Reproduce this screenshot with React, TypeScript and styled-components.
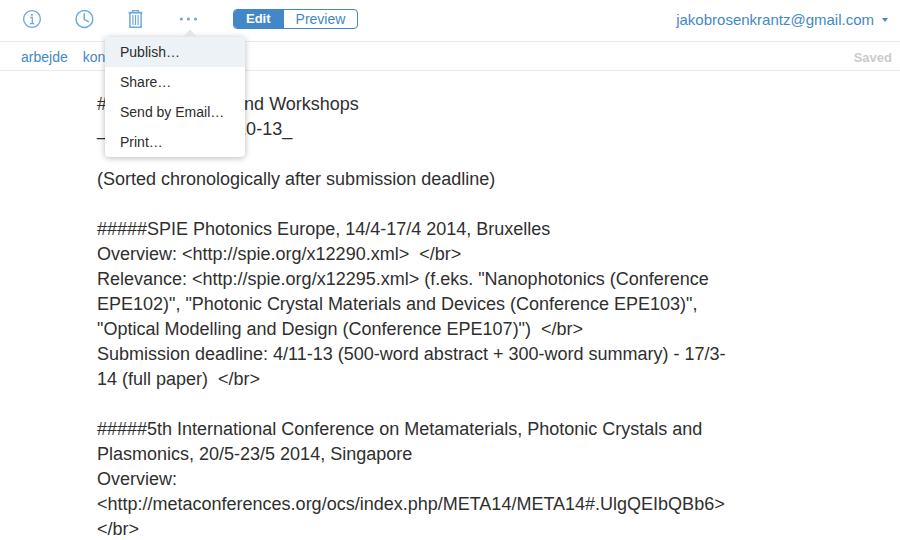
import React, { useState } from "react";
import styled, { createGlobalStyle, css } from "styled-components";

const blue = "#4288c8";
const iconBlue = "#6fa9dc";

const GlobalStyle = createGlobalStyle`
  *, *::before, *::after { box-sizing: border-box; }
  body { margin: 0; background: #fff; }
  body, button, textarea { font-family: "Liberation Sans", Helvetica, Arial, sans-serif; }
  button { margin: 0; padding: 0; border: 0; background: none; cursor: pointer; }
`;

const Page = styled.div`
  display: flex;
  flex-direction: column;
  height: 100vh;
`;

const Toolbar = styled.header`
  display: flex;
  align-items: flex-start;
  flex: none;
  height: 42px;
  padding: 0 12px 0 6px;
  border-bottom: 1px solid #e9e9e9;
`;

const ToolSlot = styled.div`
  position: relative;
  width: 52px;
`;

const ToolButton = styled.button`
  display: flex;
  align-items: center;
  justify-content: center;
  width: 100%;
  height: 38px;
`;

const Menu = styled.div`
  position: absolute;
  z-index: 2;
  top: 37px;
  left: -57px;
  width: 140px;
  background: #fff;
  border-radius: 4px;
  box-shadow: 0 1px 6px rgba(0, 0, 0, 0.28);
`;

const MenuPointer = styled.svg`
  position: absolute;
  bottom: 100%;
  left: 77px;
  display: block;
`;

const MenuItem = styled.button<{ $active?: boolean }>`
  display: block;
  width: 100%;
  padding: 0 15px;
  font-size: 14px;
  line-height: 30px;
  text-align: left;
  white-space: nowrap;
  color: #2c2c2c;
  background: ${(p) => (p.$active ? "#ecf2f6" : "transparent")};

  &:last-of-type { border-radius: 0 0 4px 4px; }
`;

const Segments = styled.div`
  display: flex;
  margin: 9px 0 0 19px;
  border: 1px solid ${blue};
  border-radius: 4px;
  overflow: hidden;
`;

const Segment = styled.button<{ $selected: boolean }>`
  padding: 0 12px;
  font-size: 14px;
  line-height: 18px;
  color: ${blue};

  ${(p) =>
    p.$selected &&
    css`
      color: #fff;
      background: ${blue};
      font-size: 13px;
      font-weight: bold;
    `}

  & + & { border-left: 1px solid ${blue}; }
`;

const Account = styled.button`
  display: flex;
  align-items: center;
  gap: 8px;
  height: 39px;
  margin-left: auto;
  font-size: 15px;
  color: ${blue};
`;

const TagBar = styled.div`
  display: flex;
  align-items: center;
  flex: none;
  gap: 15px;
  height: 29px;
  padding: 2px 8px 0 21px;
  border-bottom: 1px solid #e9e9e9;
  font-size: 14px;
`;

const Tag = styled.a`
  color: ${blue};
  text-decoration: none;
`;

const Status = styled.span`
  margin-left: auto;
  font-size: 13px;
  font-weight: bold;
  color: #cbcbcb;
`;

const Editor = styled.textarea`
  flex: 1;
  display: block;
  width: 100%;
  max-width: 740px;
  min-height: 0;
  padding: 21px 0 0 97px;
  border: 0;
  outline: 0;
  resize: none;
  overflow: hidden;
  background: transparent;
  font-size: 18px;
  line-height: 25px;
  color: #2f2f2f;
`;

const InfoIcon = () => (
  <svg width="20" height="20" viewBox="0 0 20 20" fill="none" stroke={iconBlue}>
    <circle cx="10" cy="10" r="8.4" strokeWidth="1.4" />
    <circle cx="9.9" cy="5.8" r="1.1" fill={iconBlue} stroke="none" />
    <path d="M8.2 8.5h2.1v6M8 14.6h4.3" strokeWidth="1.3" />
  </svg>
);

const ClockIcon = () => (
  <svg width="20" height="20" viewBox="0 0 20 20" fill="none" stroke={iconBlue}>
    <circle cx="10.4" cy="10" r="8.4" strokeWidth="1.5" />
    <path d="M10.2 4.3v6.1l4.7 2.5" strokeWidth="1.5" />
  </svg>
);

const TrashIcon = () => (
  <svg width="16" height="20" viewBox="0 0 16 20" fill="none" stroke={iconBlue}>
    <path d="M.6 3.7h13.8" strokeWidth="1.8" />
    <path d="M4.6 3.2V1.6h5.8v1.6" strokeWidth="1.4" />
    <path d="M1.9 4v14.3h11.2V4" strokeWidth="1.5" />
    <path d="M4.9 6v10M7.5 6v10M10.1 6v10" strokeWidth="1.2" />
  </svg>
);

const DotsIcon = () => (
  <svg width="20" height="20" viewBox="0 0 20 20" fill={iconBlue}>
    <circle cx="3.3" cy="10" r="1.6" />
    <circle cx="10.4" cy="10" r="1.6" />
    <circle cx="17.5" cy="10" r="1.6" />
  </svg>
);

const tags = ["arbejde", "konf"];
const actions = ["Publish…", "Share…", "Send by Email…", "Print…"];

const note = `###Conferences and Workshops
_Last update: 10/10-13_

(Sorted chronologically after submission deadline)

#####SPIE Photonics Europe, 14/4-17/4 2014, Bruxelles
Overview: <http://spie.org/x12290.xml>  </br>
Relevance: <http://spie.org/x12295.xml> (f.eks. "Nanophotonics (Conference EPE102)", "Photonic Crystal Materials and Devices (Conference EPE103)", "Optical Modelling and Design (Conference EPE107)")  </br>
Submission deadline: 4/11-13 (500-word abstract + 300-word summary) - 17/3-14 (full paper)  </br>

#####5th International Conference on Metamaterials, Photonic Crystals and Plasmonics, 20/5-23/5 2014, Singapore
Overview: <http://metaconferences.org/ocs/index.php/META14/META14#.UlgQEIbQBb6>  </br>`;

export default function App() {
  const [mode, setMode] = useState("Edit");
  const [menuOpen, setMenuOpen] = useState(true);
  const [text, setText] = useState(note);

  return (
    <Page>
      <GlobalStyle />
      <Toolbar>
        <ToolSlot>
          <ToolButton aria-label="Info"><InfoIcon /></ToolButton>
        </ToolSlot>
        <ToolSlot>
          <ToolButton aria-label="History"><ClockIcon /></ToolButton>
        </ToolSlot>
        <ToolSlot>
          <ToolButton aria-label="Trash"><TrashIcon /></ToolButton>
        </ToolSlot>
        <ToolSlot>
          <ToolButton
            aria-label="More"
            aria-haspopup="menu"
            aria-expanded={menuOpen}
            onClick={() => setMenuOpen(!menuOpen)}
          >
            <DotsIcon />
          </ToolButton>
          {menuOpen && (
            <Menu role="menu">
              <MenuPointer width="16" height="8" viewBox="0 0 16 8">
                <path d="M1 8 8 .6 15 8z" fill="#e3e5e7" />
              </MenuPointer>
              {actions.map((label, i) => (
                <MenuItem key={label} role="menuitem" $active={i === 0}>
                  {label}
                </MenuItem>
              ))}
            </Menu>
          )}
        </ToolSlot>
        <Segments>
          {["Edit", "Preview"].map((label) => (
            <Segment
              key={label}
              $selected={mode === label}
              aria-pressed={mode === label}
              onClick={() => setMode(label)}
            >
              {label}
            </Segment>
          ))}
        </Segments>
        <Account aria-haspopup="menu">
          jakobrosenkrantz@gmail.com
          <svg width="6" height="4" viewBox="0 0 6 4" fill={blue}>
            <path d="M0 0h6L3 4z" />
          </svg>
        </Account>
      </Toolbar>
      <TagBar>
        {tags.map((tag) => (
          <Tag key={tag} href={`#${tag}`}>{tag}</Tag>
        ))}
        <Status>Saved</Status>
      </TagBar>
      <Editor
        aria-label="Note"
        spellCheck={false}
        value={text}
        onChange={(e) => setText(e.target.value)}
      />
    </Page>
  );
}
